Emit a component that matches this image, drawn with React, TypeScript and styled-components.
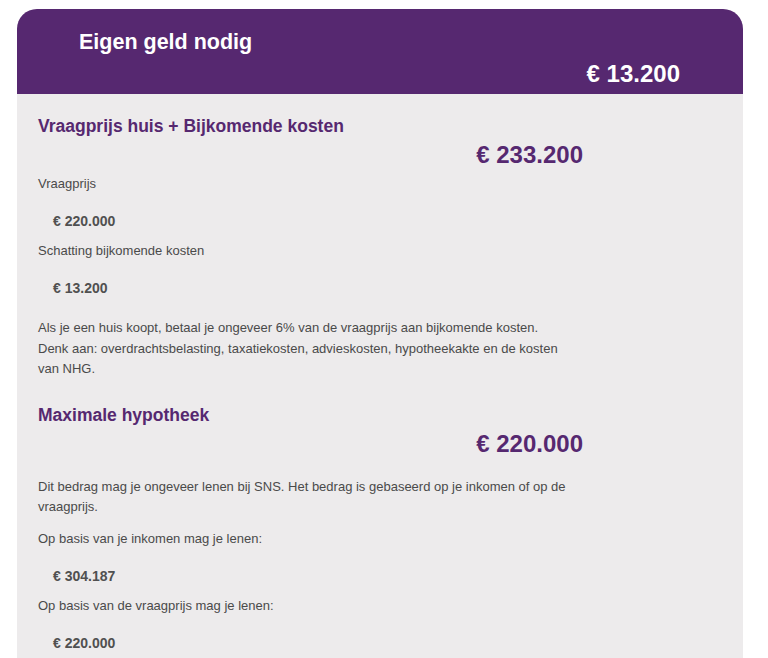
import React from "react";
import styled, { createGlobalStyle } from "styled-components";

const GlobalStyle = createGlobalStyle`
  html, body {
    margin: 0;
    padding: 0;
    background: #ffffff;
  }
  body {
    font-family: "Liberation Sans", Arial, sans-serif;
    -webkit-font-smoothing: antialiased;
  }
`;

const Page = styled.div`
  padding: 9px 25px 0 17px;
`;

const Card = styled.section`
  width: 726px;
  border-radius: 20px 20px 0 0;
  overflow: hidden;
  background: #edebec;
`;

const Header = styled.header`
  background: #562870;
  color: #ffffff;
  padding: 20px 63px 6px 62px;
  display: flex;
  flex-direction: column;
`;

const HeaderTitle = styled.h1`
  margin: 0;
  font-size: 21.5px;
  line-height: 26px;
  font-weight: 700;
`;

const HeaderAmount = styled.div`
  margin-top: 5px;
  align-self: flex-end;
  font-size: 24px;
  line-height: 28px;
  font-weight: 700;
`;

const Body = styled.div`
  padding: 21px 21px 40px;
  display: flex;
  flex-direction: column;
  gap: 24px;
`;

const Section = styled.div`
  width: 545px;
  display: flex;
  flex-direction: column;
`;

const SectionTitle = styled.h2`
  margin: 0;
  color: #562870;
  font-size: 17.5px;
  line-height: 22px;
  font-weight: 700;
`;

const BigAmount = styled.div`
  margin: 4px 0 5px;
  align-self: flex-end;
  color: #562870;
  font-size: 24px;
  line-height: 28px;
  font-weight: 700;
`;

const Text = styled.p<{ $top?: number; $bottom?: number; $lh?: number }>`
  margin: ${(p) => p.$top ?? 0}px 0 ${(p) => p.$bottom ?? 0}px;
  max-width: 530px;
  color: #4a4a4a;
  font-size: 13px;
  line-height: ${(p) => p.$lh ?? 20}px;
`;

const Value = styled.div`
  margin: 17px 0 10px 15px;
  color: #505050;
  font-size: 14px;
  line-height: 20px;
  font-weight: 700;
`;

export default function App() {
  return (
    <>
      <GlobalStyle />
      <Page>
        <Card>
          <Header>
            <HeaderTitle>Eigen geld nodig</HeaderTitle>
            <HeaderAmount>€ 13.200</HeaderAmount>
          </Header>
          <Body>
            <Section>
              <SectionTitle>Vraagprijs huis + Bijkomende kosten</SectionTitle>
              <BigAmount>€ 233.200</BigAmount>
              <Text>Vraagprijs</Text>
              <Value>€ 220.000</Value>
              <Text>Schatting bijkomende kosten</Text>
              <Value>€ 13.200</Value>
              <Text $top={10} $lh={20.5}>
                Als je een huis koopt, betaal je ongeveer 6% van de vraagprijs aan bijkomende kosten.
                <br />
                Denk aan: overdrachtsbelasting, taxatiekosten, advieskosten, hypotheekakte en de kosten van NHG.
              </Text>
            </Section>
            <Section>
              <SectionTitle>Maximale hypotheek</SectionTitle>
              <BigAmount>€ 220.000</BigAmount>
              <Text $top={14} $bottom={12}>
                Dit bedrag mag je ongeveer lenen bij SNS. Het bedrag is gebaseerd op je inkomen of op de vraagprijs.
              </Text>
              <Text>Op basis van je inkomen mag je lenen:</Text>
              <Value>€ 304.187</Value>
              <Text>Op basis van de vraagprijs mag je lenen:</Text>
              <Value>€ 220.000</Value>
            </Section>
          </Body>
        </Card>
      </Page>
    </>
  );
}
